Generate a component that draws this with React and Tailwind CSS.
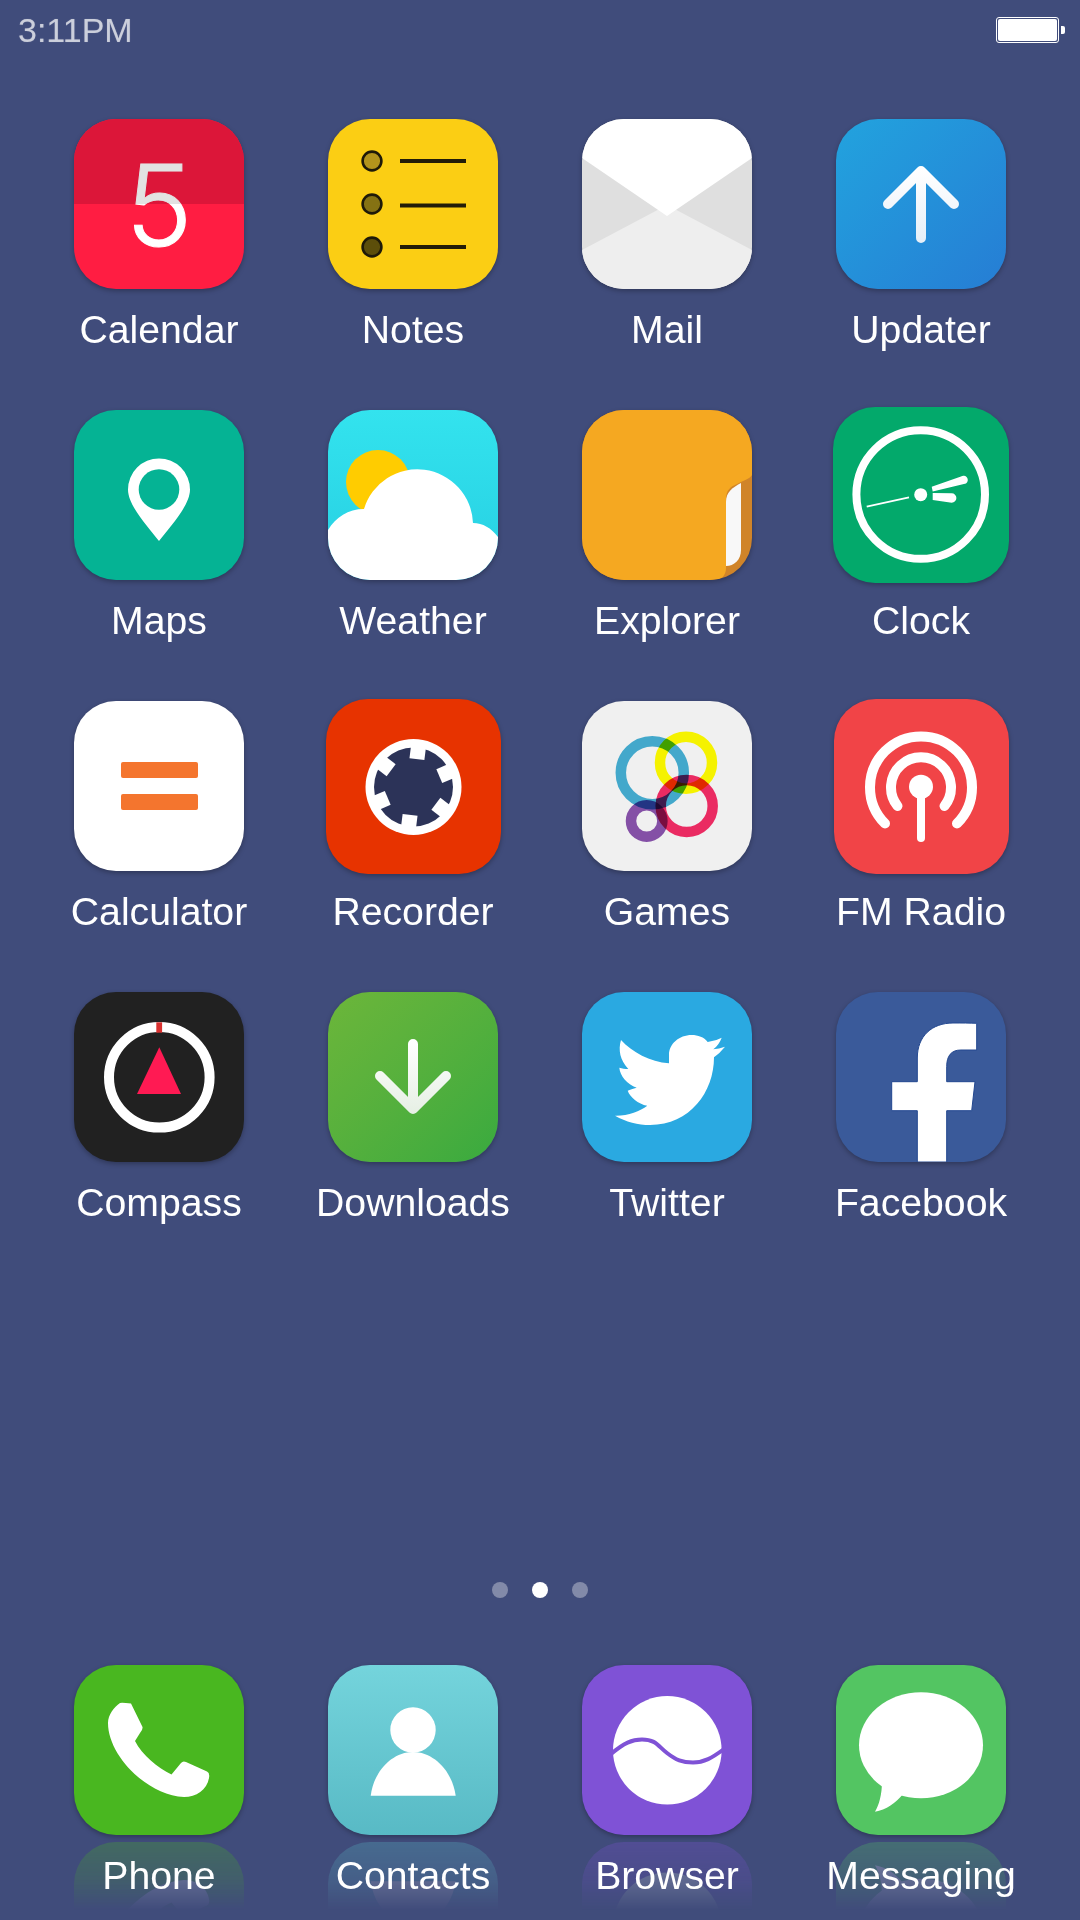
const Tile = ({ size = 170, bg, flat, children }) => {
  const box = size === 176 ? 'w-[176px] h-[176px]' : size === 175 ? 'w-[175px] h-[175px]' : 'w-[170px] h-[170px]'
  return (
    <div className={`${box} ${bg} shrink-0 overflow-hidden rounded-[42px] ${flat ? '' : 'shadow-[0_2px_5px_rgba(0,0,0,0.28)]'}`}>
      <svg viewBox={`0 0 ${size} ${size}`} className="block w-full h-full">
        {children}
      </svg>
    </div>
  )
}

const Calendar = () => (
  <Tile bg="bg-[#ff1d42]">
    <defs>
      <linearGradient id="five" gradientUnits="userSpaceOnUse" x1="0" y1="0" x2="0" y2="170">
        <stop offset="0.5" stopColor="#e2e2e2" />
        <stop offset="0.5" stopColor="#ffffff" />
      </linearGradient>
    </defs>
    <rect width="170" height="85" fill="#dc1639" />
    <text x="85" y="127" textAnchor="middle" fontSize="113" fontWeight="300" fontFamily="Inter, sans-serif" fill="url(#five)" stroke="url(#five)" strokeWidth="1">5</text>
  </Tile>
)

const Notes = () => (
  <Tile bg="bg-[#fbce14]">
    {[[42, '#b3941c'], [85, '#857213'], [128, '#5c4e0a']].map(([y, c]) => (
      <g key={y}>
        <circle cx="44" cy={y} r="9.4" fill={c} stroke="#1f1a08" strokeWidth="2.6" />
        <rect x="72" y={y - 2 + (y === 85 ? 1.5 : 0)} width="66" height="4" fill="#221c08" />
      </g>
    ))}
  </Tile>
)

const Mail = () => (
  <Tile bg="bg-[#dfdfdf]">
    <path d="M0 131 L85 86 L170 131 V170 H0 Z" fill="#eeeeee" />
    <path d="M0 0 H170 V39 L85 97 L0 39 Z" fill="#ffffff" />
  </Tile>
)

const Updater = () => (
  <Tile bg="bg-linear-to-br from-[#22a3de] to-[#267dd4]">
    <defs>
      <linearGradient id="up" gradientUnits="userSpaceOnUse" x1="0" y1="50" x2="0" y2="122">
        <stop offset="0" stopColor="#ffffff" />
        <stop offset="1" stopColor="#e6eff8" />
      </linearGradient>
    </defs>
    <path d="M52 85 L85 52 L118 85 M85 52 V119" fill="none" stroke="url(#up)" strokeWidth="10" strokeLinecap="round" strokeLinejoin="round" />
  </Tile>
)

const Maps = () => (
  <Tile bg="bg-[#05b394]">
    <path d="M85 131 C75 118 54 96 54 79.5 A31 31 0 1 1 116 79.5 C116 96 95 118 85 131 Z" fill="#fff" />
    <circle cx="85" cy="79.5" r="20.3" fill="#05b394" />
  </Tile>
)

const Weather = () => (
  <Tile bg="bg-linear-to-b from-[#33e3ee] to-[#26cfe2]">
    <circle cx="50" cy="72" r="32" fill="#ffcc00" />
    <path d="M0 120 C8 107 20 99 36 99 A55.7 55.7 0 0 1 145 113 C155 113 163 118 170 127 V170 H0 Z" fill="#fff" />
  </Tile>
)

const Explorer = () => (
  <Tile bg="bg-[#d08429]">
    <path d="M144 92 C144 82 150 78 159 73 V140 C159 150 152 156 144 156 Z" fill="#f8f8f8" />
    <path d="M0 0 H170 V65 C168 69 162 70 155 74 C148 77 144 80 144 90 V158 C144 165 140 170 132 170 H0 Z" fill="#f5a821" />
  </Tile>
)

const Clock = () => (
  <Tile size={176} bg="bg-[#03a96b]">
    <circle cx="87.7" cy="87.5" r="64.3" fill="none" stroke="#fff" strokeWidth="8" />
    <circle cx="87.7" cy="87.7" r="6.5" fill="#fff" />
    <path d="M33.7 99.7 L76 90.3" stroke="#fff" strokeWidth="1.8" />
    <path d="M98.7 79.7 L128 69.5 A3.8 3.8 0 0 1 133 76.5 L99.7 84.5 Z" fill="#fff" />
    <path d="M99.7 86 L118.7 86.3 A4.7 4.7 0 0 1 118.7 95.7 L99.7 93 Z" fill="#fff" />
  </Tile>
)

const Calculator = () => (
  <Tile bg="bg-white">
    <rect x="47" y="61" width="77" height="16" rx="2" fill="#f4752e" />
    <rect x="47" y="93" width="77" height="16" rx="2" fill="#f4752e" />
  </Tile>
)

const Recorder = () => (
  <Tile size={175} bg="bg-[#e73300]">
    <circle cx="87.5" cy="88" r="48" fill="#fff" />
    <circle cx="87.5" cy="88" r="39.5" fill="#2c3358" />
    {[7, 67, 127, 187, 247, 307].map((a) => (
      <rect key={a} x="80" y="47" width="15" height="13" fill="#fff" transform={`rotate(${a} 87.5 88)`} />
    ))}
  </Tile>
)

const Games = () => (
  <Tile bg="bg-[#f0f0f0]">
    <g fill="none" strokeWidth="10.5" className="isolate">
      <circle cx="70.3" cy="71.7" r="31.5" stroke="#43a8cb" className="mix-blend-multiply" />
      <circle cx="104" cy="61.7" r="26" stroke="#f5f200" className="mix-blend-multiply" />
      <circle cx="104.7" cy="105" r="26" stroke="#ea2b62" className="mix-blend-multiply" />
      <circle cx="64.7" cy="120" r="15.7" stroke="#8450a6" className="mix-blend-multiply" />
    </g>
  </Tile>
)

const Radio = () => (
  <Tile size={175} bg="bg-[#f14447]">
    <g fill="none" stroke="#fff" strokeWidth="10" strokeLinecap="round">
      <path d="M63.5 107 A30 30 0 1 1 110.5 107" />
      <path d="M51 124.5 A51 51 0 1 1 123 124.5" />
    </g>
    <circle cx="87" cy="87.7" r="12" fill="#fff" />
    <path d="M87 90 V139" stroke="#fff" strokeWidth="8" strokeLinecap="round" />
  </Tile>
)

const Compass = () => (
  <Tile bg="bg-[#212121]">
    <circle cx="85.3" cy="85.3" r="50.3" fill="none" stroke="#fff" strokeWidth="10" />
    <rect x="82.3" y="30.3" width="5.8" height="10.4" fill="#d9302f" />
    <path d="M85.3 55.3 L107 102 H63 Z" fill="#ff1a53" />
  </Tile>
)

const Downloads = () => (
  <Tile bg="bg-linear-to-br from-[#6cb63a] to-[#38aa3f]">
    <defs>
      <linearGradient id="down" gradientUnits="userSpaceOnUse" x1="0" y1="48" x2="0" y2="122">
        <stop offset="0" stopColor="#ffffff" />
        <stop offset="1" stopColor="#e6efe4" />
      </linearGradient>
    </defs>
    <path d="M85 52 V117 M52 84 L85 117 L118 84" fill="none" stroke="url(#down)" strokeWidth="10" strokeLinecap="round" strokeLinejoin="round" />
  </Tile>
)

const Twitter = () => (
  <Tile bg="bg-[#2aa9e1]">
    <path
      d="M139.7 45.7 Q134 49 125.7 50 C122 45 116 43 109.7 43 C97 43 87 52 87 63 L87 71.3 C68 70 50 60 39 48 C36 58 38 68 46.3 77 C43 77 40 76.5 37.3 75.7 C38 84 45 92 54.7 95.7 C51 97 48 97.5 45.7 98.7 C48 105 56 112 65.3 113.7 C58 119 46 124 33 123.7 C44 130 56 133 68 133 C108 133 132 100 132 65.3 Q138 61 143 54.7 Q137 57 131.3 57.3 Q137 53 139.7 45.7 Z"
      fill="#fff"
    />
  </Tile>
)

const Facebook = () => (
  <Tile bg="bg-[#3a5a9a]">
    <path
      d="M140.7 31.3 V58 H125 C115 58 110.7 64 110.7 74.7 V89.7 H139 L135.7 118.7 H110.7 V170 H81.3 V118.7 H55.7 V89.7 H81.3 V66 C81.3 44 96 31 117 31 C125 31 134 31 140.7 31.3 Z"
      fill="#fff"
      stroke="#22478f"
      strokeWidth="1"
    />
  </Tile>
)

const Phone = ({ flat }) => (
  <Tile flat={flat} bg="bg-[#49b720]">
    <path d="M46 38 Q48 37.5 57 38.5 L68.5 62 Q69 65 66 68 L61 76 C68 90 84 103 97.5 109.5 L107 98 Q109 95.5 112 97 L133 106.5 Q136 108 135 113 C133 125 122 132 110 132 C72 130 34 90 34 58 C34 50 40 42 46 38 Z" fill="#fff" />
  </Tile>
)

const Contacts = ({ flat }) => (
  <Tile flat={flat} bg="bg-linear-to-b from-[#74d4dc] to-[#58bac5]">
    <circle cx="85" cy="65" r="22.7" fill="#fff" />
    <path d="M42.7 130.7 C46 105 65 87 85 87 C105 87 124 105 127.7 130.7 Z" fill="#fff" />
  </Tile>
)

const Browser = ({ flat }) => (
  <Tile flat={flat} bg="bg-[#7f52d6]">
    <circle cx="85.3" cy="85.3" r="54.3" fill="#fff" />
    <path d="M29 89 C42 78 50 74.5 60 74.5 C74 74.5 76 81 85 88 C94 95 100 97.5 111 97.5 C122 97.5 130 93 142 84" fill="none" stroke="#7f52d6" strokeWidth="4" />
  </Tile>
)

const Messaging = ({ flat }) => (
  <Tile flat={flat} bg="bg-[#53c562]">
    <ellipse cx="85" cy="80.3" rx="62" ry="53" fill="#fff" />
    <path d="M46 116 C46 130 43 140 39 146.7 C50 145 60 138 67 129 Z" fill="#fff" />
  </Tile>
)

const apps = [
  ['Calendar', Calendar], ['Notes', Notes], ['Mail', Mail], ['Updater', Updater],
  ['Maps', Maps], ['Weather', Weather], ['Explorer', Explorer], ['Clock', Clock],
  ['Calculator', Calculator], ['Recorder', Recorder], ['Games', Games], ['FM Radio', Radio],
  ['Compass', Compass], ['Downloads', Downloads], ['Twitter', Twitter], ['Facebook', Facebook],
]

const dock = [
  ['Phone', Phone], ['Contacts', Contacts], ['Browser', Browser], ['Messaging', Messaging],
]

const Label = ({ children }) => (
  <span className="relative mt-[18px] whitespace-nowrap text-[39.2px] leading-[45px] text-white">{children}</span>
)

export default function App() {
  return (
    <div className="flex h-[1920px] w-[1080px] flex-col overflow-hidden bg-[#404c7b] font-['Liberation_Sans',sans-serif]">
      {/* Status bar */}
      <div className="flex h-[119px] items-start justify-between pl-[18px] pr-[15px] pt-[11px]">
        <span className="text-[34px] leading-[39px] text-white/60 [text-shadow:0_0_1px_rgba(255,255,255,0.35)]">3:11PM</span>
        <div className="mt-[6px] flex items-center gap-[2px]">
          <div className="h-[26px] w-[63px] rounded-[3px] border border-white p-px">
            <div className="h-full w-full rounded-[2px] bg-white" />
          </div>
          <div className="h-[8px] w-[4px] rounded-r-[2px] bg-white" />
        </div>
      </div>

      {/* App grid */}
      <div className="grid auto-rows-[291px] grid-cols-4 px-8">
        {apps.map(([name, Icon]) => (
          <div key={name} className="flex flex-col items-center">
            <div className="flex h-[170px] items-center justify-center">
              <Icon />
            </div>
            <Label>{name}</Label>
          </div>
        ))}
      </div>

      {/* Page dots */}
      <div className="mt-[299px] flex justify-center gap-6">
        <span className="h-4 w-4 rounded-full bg-white/35" />
        <span className="h-4 w-4 rounded-full bg-white" />
        <span className="h-4 w-4 rounded-full bg-white/35" />
      </div>

      {/* Dock */}
      <div className="mt-[67px] grid grid-cols-4 px-8">
        {dock.map(([name, Icon]) => (
          <div key={name} className="relative flex flex-col items-center">
            <div className="flex h-[170px] items-center justify-center">
              <Icon />
            </div>
            <div className="absolute left-1/2 top-[177px] -translate-x-1/2 -scale-y-100 [mask-image:linear-gradient(to_top,rgba(0,0,0,0.28)_0%,rgba(0,0,0,0.17)_22%,transparent_40%)]">
              <Icon flat />
            </div>
            <Label>{name}</Label>
          </div>
        ))}
      </div>
    </div>
  )
}
